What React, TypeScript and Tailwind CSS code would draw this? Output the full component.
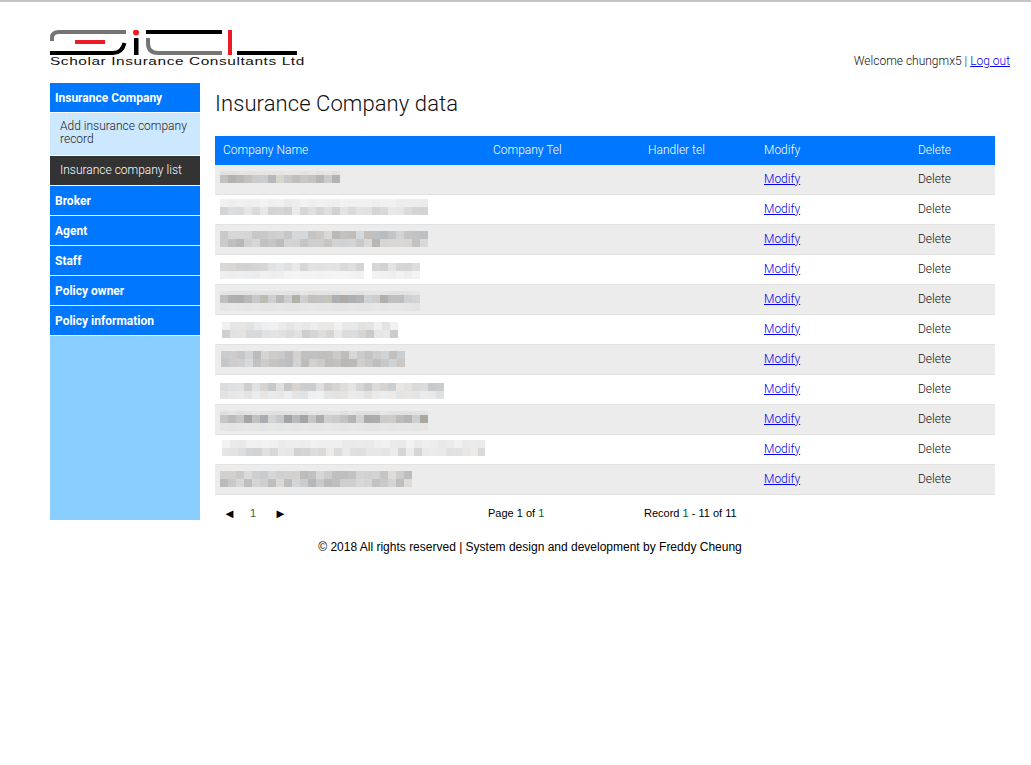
const sideMenu = ['Broker', 'Agent', 'Staff', 'Policy owner', 'Policy information'];

// blurred company names: left/top offset inside the row, one darkness level per band of blocks
type BlurRow = { left: number; top: number; cols: number; rows: number[]; gapAt?: number; firstH?: number };

const blurRows: BlurRow[] = [
    { left: 5, top: 6, cols: 15, rows: [0.12, 1], firstH: 4 },
    { left: 5, top: 4, cols: 26, rows: [0.2, 0.65] },
    { left: 5, top: 6, cols: 26, rows: [0.8, 0.8] },
    { left: 5, top: 8, cols: 25, rows: [0.65, 0.18], gapAt: 18 },
    { left: 5, top: 6, cols: 25, rows: [0.12, 1.05, 0.06], firstH: 4 },
    { left: 7, top: 7, cols: 22, rows: [0.35, 0.75] },
    { left: 6, top: 6, cols: 23, rows: [0.75, 0.8] },
    { left: 5, top: 8, cols: 28, rows: [0.8, 0.4] },
    { left: 5, top: 6, cols: 26, rows: [0.15, 1.15, 0.06], firstH: 4 },
    { left: 7, top: 5, cols: 33, rows: [0.25, 0.65] },
    { left: 5, top: 6, cols: 24, rows: [0.75, 0.8] },
];

function blockColor(row: number, col: number, lvl: number, seed: number, base: number): string {
    const n = Math.abs(Math.sin(seed * 12.9 + col * 78.2 + row * 37.7) * 43758.5) % 1;
    const t = Math.abs(Math.sin(seed * 5.3 + col * 19.1 + row * 91.7) * 9631.7) % 1;
    const dark = (0.1 + n * 0.26) * lvl;
    const v = Math.round(base - dark * 170);
    const tint = Math.round((t - 0.5) * 8 * Math.min(lvl, 1));
    return `rgb(${v + tint}, ${v}, ${v - tint})`;
}

function BlurName({ data, seed, base }: { data: BlurRow; seed: number; base: number }) {
    return (
        <div className="flex h-[29px] flex-col overflow-hidden" style={{ paddingLeft: data.left, paddingTop: data.top }}>
            {data.rows.map((lvl, r) => (
                <div key={r} className="flex shrink-0" style={{ height: r === 0 && data.firstH ? data.firstH : 8 }}>
                    {Array.from({ length: data.cols }).map((_, c) => (
                        <span
                            key={c}
                            className="h-full w-2 shrink-0"
                            style={{ backgroundColor: c === data.gapAt ? 'transparent' : blockColor(r, c, lvl, seed, base) }}
                        />
                    ))}
                </div>
            ))}
        </div>
    );
}

function Logo() {
    return (
        <div className="w-[247px]">
            <svg width="247" height="26" viewBox="50 30 247 26" className="block">
                <path d="M52 41 V38 Q52 32 59 32 H126" fill="none" stroke="#757575" strokeWidth="4" />
                <rect x="75" y="40" width="30" height="4" fill="#ed1c24" />
                <path d="M50 53 H113 Q122 53 124.5 43" fill="none" stroke="#000" strokeWidth="4" />
                <circle cx="136" cy="32.5" r="3" fill="#ed1c24" />
                <rect x="134" y="38" width="4.5" height="17" fill="#000" />
                <rect x="146" y="30" width="76" height="4" fill="#000" />
                <path d="M148 38 V43 Q148 53 158 53 H222" fill="none" stroke="#757575" strokeWidth="4" />
                <rect x="228" y="30" width="4" height="25" fill="#ed1c24" />
                <rect x="237" y="51" width="60" height="4" fill="#000" />
            </svg>
            <div className="origin-left scale-x-[1.4] whitespace-nowrap font-['Liberation_Sans',sans-serif] text-[11px] leading-[10px] tracking-[0.42px] text-[#111]">
                Scholar Insurance Consultants Ltd
            </div>
        </div>
    );
}

export default function App() {
    return (
        <div className="h-[765px] border-t-2 border-[#c4c4c4] bg-white font-['Roboto',sans-serif] text-xs font-light">
            <div className="w-[1031px]">
                <header className="flex h-[81px] items-start justify-between pt-[28px] pr-[21px] pl-[50px]">
                    <Logo />
                    <div className="pt-[24px] leading-[14px] text-[#111]">
                        Welcome chungmx5 | <a href="#" className="text-[#0000ee] underline">Log out</a>
                    </div>
                </header>

                <div className="flex gap-[15px] pl-[50px]">
                    <nav className="flex h-[437px] w-[150px] flex-col bg-[#88ceff] text-white">
                        <a className="flex h-[30px] items-center border-b border-white bg-[#0077ff] pl-[5px] font-bold">Insurance Company</a>
                        <a className="h-[43px] border-b border-white bg-[#cce8ff] pt-[7px] pl-[10px] leading-[13px] text-[#222]">Add insurance company record</a>
                        <a className="flex h-[30px] items-center border-b border-white bg-[#333333] pb-[1px] pl-[10px]">Insurance company list</a>
                        {sideMenu.map(m => (
                            <a key={m} className="flex h-[30px] items-center border-b border-white bg-[#0077ff] pl-[5px] font-bold">{m}</a>
                        ))}
                    </nav>

                    <main className="w-[780px]">
                        <h1 className="h-[53px] pt-[6px] text-[22px] leading-[30px] tracking-[0.09px] text-[#111]">Insurance Company data</h1>
                        <table className="w-full table-fixed border-separate border-spacing-0 text-left">
                            <colgroup>
                                <col className="w-[270px]" />
                                <col className="w-[155px]" />
                                <col className="w-[116px]" />
                                <col className="w-[154px]" />
                                <col className="w-[85px]" />
                            </colgroup>
                            <thead>
                                <tr className="h-[29px] bg-[#0077ff] text-white">
                                    <th className="pb-[2px] pl-2 font-light">Company Name</th>
                                    <th className="pb-[2px] pl-2 font-light">Company Tel</th>
                                    <th className="pb-[2px] pl-2 font-light">Handler tel</th>
                                    <th className="pb-[2px] pl-2 font-light">Modify</th>
                                    <th className="pb-[2px] pl-2 font-light">Delete</th>
                                </tr>
                            </thead>
                            <tbody>
                                {blurRows.map((row, i) => (
                                    <tr key={i} className={`h-[30px] ${i % 2 === 0 ? 'bg-[#ececec]' : 'bg-white'}`}>
                                        <td className="border-b border-[#e2e2e2] p-0"><BlurName data={row} seed={i + 1} base={i % 2 === 0 ? 232 : 247} /></td>
                                        <td className="border-b border-[#e2e2e2]" />
                                        <td className="border-b border-[#e2e2e2]" />
                                        <td className="border-b border-[#e2e2e2] pb-[2px] pl-2"><a href="#" className="text-[#0000ee] underline">Modify</a></td>
                                        <td className="border-b border-[#e2e2e2] pb-[2px] pl-2 text-[#111]">Delete</td>
                                    </tr>
                                ))}
                            </tbody>
                        </table>

                        <div className="flex h-[25px] items-end font-['Liberation_Sans',sans-serif] text-[11px] leading-[13px] font-normal text-black">
                            <div className="flex w-[273px] items-center pl-[8px]">
                                <span className="w-[27px] text-[13px] leading-[13px]">◄</span>
                                <span className="w-[24px] text-[#2f6b2f]">1</span>
                                <span className="text-[13px] leading-[13px]">►</span>
                            </div>
                            <div className="w-[156px]">Page 1 of <span className="text-[#0a5a2a]">1</span></div>
                            <div>Record <span className="text-[#0a5a2a]">1</span> - 11 of 11</div>
                        </div>
                    </main>
                </div>

                <footer className="w-[1060px] pt-[20px] text-center font-['Liberation_Sans',sans-serif] text-xs leading-[14px] font-normal text-black">
                    © 2018 All rights reserved | System design and development by Freddy Cheung
                </footer>
            </div>
        </div>
    );
}
